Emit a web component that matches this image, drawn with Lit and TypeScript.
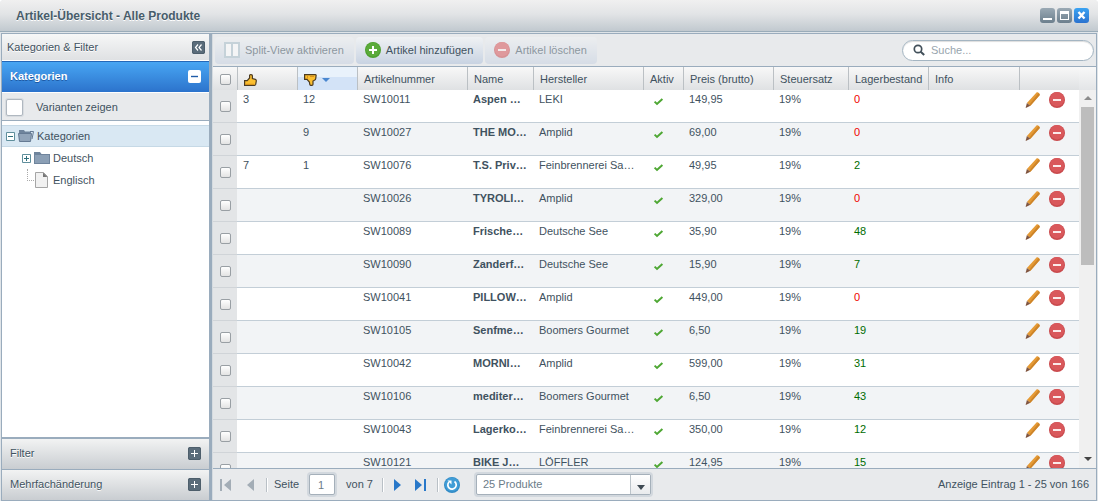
import { LitElement, html, css, svg } from "lit";
import { customElement } from "lit/decorators.js";
import { classMap } from "lit/directives/class-map.js";

interface Article {
  up: string;
  down: string;
  number: string;
  name: string;
  supplier: string;
  price: string;
  stock: number;
}

const article = (
  up: string, down: string, number: string, name: string, supplier: string, price: string, stock: number,
): Article => ({ up, down, number, name, supplier, price, stock });

const ARTICLES: Article[] = [
  article("3", "12", "SW10011", "Aspen …", "LEKI", "149,95", 0),
  article("", "9", "SW10027", "THE MO…", "Amplid", "69,00", 0),
  article("7", "1", "SW10076", "T.S. Priv…", "Feinbrennerei Sa…", "49,95", 2),
  article("", "", "SW10026", "TYROLI…", "Amplid", "329,00", 0),
  article("", "", "SW10089", "Frische…", "Deutsche See", "35,90", 48),
  article("", "", "SW10090", "Zanderf…", "Deutsche See", "15,90", 7),
  article("", "", "SW10041", "PILLOW…", "Amplid", "449,00", 0),
  article("", "", "SW10105", "Senfme…", "Boomers Gourmet", "6,50", 19),
  article("", "", "SW10042", "MORNI…", "Amplid", "599,00", 31),
  article("", "", "SW10106", "mediter…", "Boomers Gourmet", "6,50", 43),
  article("", "", "SW10043", "Lagerko…", "Feinbrennerei Sa…", "350,00", 12),
  article("", "", "SW10121", "BIKE J…", "LÖFFLER", "124,95", 15),
];

const icon = (content: unknown, w = 16, h = 16) =>
  html`<svg width=${w} height=${h} viewBox="0 0 ${w} ${h}" aria-hidden="true">${content}</svg>`;

const plusCircle = icon(svg`
  <circle cx="8" cy="8" r="8" fill="#4da02f"/><circle cx="8" cy="7.6" r="7" fill="#5bab3b"/>
  <path d="M8 4v8M4 8h8" stroke="#fff" stroke-width="2"/>`);
const minusCircle = icon(svg`
  <circle cx="8" cy="8" r="8" fill="#c94a4d"/><circle cx="8" cy="7.2" r="7.2" fill="#d9585b"/>
  <path d="M4 8h8" stroke="#fbeaea" stroke-width="2"/>`);
const splitView = icon(svg`
  <path d="M0 0h16v16H0z" fill="#a9bfcb"/><path d="M2 2h5v12H2zM9 2h5v12H9z" fill="#fff"/>`);
const pencil = icon(svg`
  <path d="M11.300.700c.600-.600 1.200-.600 1.800-.100l1.300 1.100c.500.500.500 1.100 0 1.700L5.400 13.700 1.900 11z" fill="#e59a35"/>
  <path d="M13.600 1l.8.7c.5.5.5 1.100 0 1.700L5.400 13.700l-1.100-.9z" fill="#cd8429"/>
  <path d="M1.900 11l3.500 2.700-4.100 2.100c-.4.2-.7 0-.6-.4z" fill="#80553f"/>`);
const check = icon(svg`<path d="M5.6 8.600l2.400 2.300 5.400-5" fill="none" stroke="#4ea733" stroke-width="2"/>`);
const hand = svg`
  <path d="M.6 6.600h2.600L5.600 4V1.200c0-.8 2.800-.8 2.800.6v2.800l3 .8c.8.300 1 .8.900 1.600l-.6 3.400c-.2.700-.6 1-1.300 1H.6z"
    fill="#fbbf30" stroke="#4b3b22" stroke-width="1.200"/>
  <path d="M1.500 10.300h8.500" stroke="#d9921b"/>`;
const thumbUp = icon(hand, 13, 12);
const thumbDown = icon(svg`
  <path d="M.6.6h10.800c.5 0 .8.4.7 1l-.4 3.200c-.1.800-.6 1.200-1.300 1.500L9 7v3.200c0 1.600-3 1.600-3.200.3L5.400 8 3 5.400H.6z"
    fill="#fbbf30" stroke="#4b3b22" stroke-width="1.200"/>
  <path d="M3.500 2v2.500M6 2.500h4" stroke="#d9921b"/>`, 13, 12);
const plus = icon(svg`<path d="M6.500 3v7M3 6.500h7" stroke="#fff"/>`, 13, 13);
const minus = icon(svg`<path d="M3 6.500h7" stroke="#1f5ba8" stroke-width="1.400"/>`, 13, 13);
const collapse = icon(svg`<path d="M6 3.500l-2.500 3L6 9.500M9.500 3.500L7 6.500l2.500 3" fill="none" stroke="#fff" stroke-width="1.200"/>`, 13, 13);
const expander = (open: boolean) => icon(svg`
  <path d="M.5.5h8v8h-8z" fill="#fff" stroke="#5f8f9c"/>
  <path d="M2 4.500h5${open ? "" : "M4.5 2v5"}" stroke="#2f6f7c"/>`, 9, 9);
const folder = icon(svg`
  <path d="M0 2h6l1.500 2H16v10H0z" fill="#6f849c"/><path d="M1 5h14v8H1z" fill="#8b9fb5"/>`);
const folderOpen = icon(svg`
  <path d="M1 2h5l1 1.500h6V6H4l-2.500 6H1z" fill="#6f849c"/>
  <path d="M.5 5.500H13.500L12.500 13.500H1.500z" fill="#91a4b9" stroke="#657a93"/>
  <path d="M12 3.500h3.500L14 11" fill="none" stroke="#657a93"/>`);
const page = icon(svg`
  <path d="M1.500.5h8l4 4v11h-12z" fill="#f1f1f1" stroke="#a5a5a5"/><path d="M9 .5v4.500h4.500z" fill="#777"/>`);
const loupe = icon(svg`
  <circle cx="5" cy="5" r="3.700" fill="none" stroke="#42505a" stroke-width="1.700"/>
  <path d="M7.700 7.700l3.500 3.300" stroke="#42505a" stroke-width="2"/>`, 12, 12);
const refresh = icon(svg`
  <circle cx="8" cy="8" r="8" fill="#318bc6"/><circle cx="8" cy="7.500" r="7" fill="#419dd6"/>
  <path d="M10.500 4.500A4.200 4.200 0 1 1 5 5" fill="none" stroke="#fff" stroke-width="1.700"/>
  <path d="M3.500 3.500h4v4z" fill="#fff"/>`);

@customElement("app-root")
export class AppRoot extends LitElement {
  static styles = css`
    :host {
      display: block;
      height: 100vh;
      overflow: hidden;
      font: 11px/13px "Liberation Sans", Arial, sans-serif;
      color: #3f5260;
    }
    * { box-sizing: border-box; }
    svg { display: block; flex: none; }
    button, input, select { font: inherit; color: inherit; margin: 0; }
    button { border: 0; padding: 0; background: none; }
    .window { height: 100%; display: flex; flex-direction: column; background: #dfe4e8; border-radius: 4px 4px 0 0; }
    .titlebar {
      flex: none; height: 32px; padding: 0 9px 0 16px; display: flex; align-items: center; gap: 2px;
      background: linear-gradient(#f0f0f0, #e2e4e6 45%, #c1c9cf); border-bottom: 1px solid #9aacb9;
      border-radius: 4px 4px 0 0;
    }
    .title { flex: 1; margin: 0; font-size: 12px; line-height: 14px; font-weight: bold; color: #475c6a; text-shadow: 0 1px #fff; }
    .tool {
      width: 15px; height: 15px; border-radius: 3px;
      background: linear-gradient(#9aa9b4, #6c7f8d);
    }
    .tool.close { background: linear-gradient(#3ba3f2, #2a72cf); }
    .frame { flex: 1; min-height: 0; display: flex; margin: 1px 1px 0; border: 1px solid #9aacbd; background: #9aacbd; }
    .sidebar { flex: none; width: 207px; display: flex; flex-direction: column; }
    .bar { flex: none; display: flex; align-items: center; justify-content: space-between; padding: 0 8px 2px 8px; }
    .bar h2 { margin: 0; font-size: inherit; font-weight: normal; text-shadow: 0 1px #fff; }
    .bar.top { height: 27px; padding: 0 4px 0 5px; background: linear-gradient(#f6f7f7, #dfe1e3); border-bottom: 1px solid #fff; }
    .bar.open { height: 32px; padding-bottom: 1px; background: linear-gradient(#48a6f3, #2c73cc); border-top: 1px solid #2468b8; border-bottom: 1px solid #fff; }
    .bar.open h2 { color: #fff; font-weight: bold; text-shadow: 0 1px #1d5aa5; }
    .bar.closed { height: 30px; margin-top: 1px; background: linear-gradient(#f2f3f3, #c9cdd1); }
    .square { width: 13px; height: 13px; border-radius: 2px; background: #5a6c7a; outline: 1px solid #4d5e6b; outline-offset: -1px; }
    .square.light { background: #fff; outline: 0; }
    .variants { flex: none; height: 28px; display: flex; align-items: center; gap: 13px; padding: 1px 0 0 4px; background: #e8eaec; border-bottom: 1px solid #9aacbd; }
    .variants input { appearance: none; width: 17px; height: 17px; background: #fff; border: 1px solid #b0b8c0; border-radius: 2px; box-shadow: 0 0 0 1px #d8dce0; }
    .tree { flex: 1; margin: 0 0 1px; padding: 4px 0 0; list-style: none; background: #fff; }
    .node { height: 22px; display: flex; align-items: center; padding-left: 20px; }
    .node.root { padding-left: 4px; background: #d9e8f3; border-block: 1px solid #c6d9e6; }
    .node svg + svg { margin: 0 3px; }
    .branch { width: 12px; height: 22px; flex: none; }
    .branch::before { content: ""; display: block; width: 8px; height: 11px; margin-left: 5px; border: dotted #aaa; border-width: 0 0 1px 1px; }
    .branch + svg { margin-right: 3px; }
    .main { flex: 1; min-width: 0; margin-left: 3px; display: flex; flex-direction: column; background: #e8eaec; border-left: 1px solid #d5dbe0; }
    .toolbar { flex: none; height: 33px; display: flex; align-items: center; gap: 2px; padding: 0 2px; border-bottom: 1px solid #9aacbd; }
    .action { height: 27px; display: flex; align-items: center; gap: 5px; padding: 0 10px 0 9px; border-radius: 4px; background: linear-gradient(#f0f2f4, #c8d3e2); white-space: nowrap; }
    .action:disabled { opacity: 0.55; }
    .search { margin-left: auto; width: 192px; height: 21px; display: flex; align-items: center; gap: 6px; padding: 0 10px; background: #fff; border: 1px solid #a4b5c2; border-radius: 11px; box-shadow: inset 0 1px 1px #ddd; }
    .search input { flex: 1; min-width: 0; border: 0; padding: 0; background: none; outline: 0; }
    .search input::placeholder { color: #98a5ae; opacity: 1; }
    .grid { flex: 1; min-height: 0; display: flex; overflow: hidden; background: #fff; }
    .rows { flex: 1; min-width: 0; overflow: hidden; }
    table { width: 100%; table-layout: fixed; border-collapse: separate; border-spacing: 0; }
    th { height: 23px; padding: 2px 0 0 6px; text-align: left; font-weight: normal; white-space: nowrap; background: linear-gradient(#f8f8f8, #dfe1e3); border-left: 1px solid #bbc0c4; }
    th:first-child { border-left: 0; }
    th.sorted { background: linear-gradient(#e9f2fb 45%, #d3e3f7 45%); }
    .sorter { display: flex; align-items: center; gap: 5px; }
    td { height: 33px; padding: 3px 0 0 6px; vertical-align: top; white-space: nowrap; overflow: hidden; border-bottom: 1px solid #c3ced7; }
    tr:nth-child(even) td { background: #f2f4f6; }
    tbody tr td.pick { padding: 11px 0 0 7px; background: #e3e5e7; border-color: #d0d4d8; }
    th.pick { padding: 2px 0 0 7px; }
    .pick input { appearance: none; display: block; width: 11px; height: 11px; border: 1px solid #999fa4; border-radius: 2px; background: linear-gradient(#fff, #e3e3e3); }
    .name { font-weight: bold; }
    .in { color: #006c00; }
    .out { color: #f00000; }
    td.tools { padding-top: 2px; }
    .pair { display: flex; gap: 8px; }
    .scroll { flex: none; width: 17px; display: flex; flex-direction: column; align-items: center; justify-content: space-between; background: #f0f0f0; }
    .cap { width: 100%; height: 23px; background: linear-gradient(#f8f8f8, #e3e5e7); }
    .thumb { width: 13px; height: 158px; background: #bdbdbd; margin-bottom: auto; }
    .scroll svg { margin: 5px 0; }
    .pager { flex: none; height: 32px; display: flex; align-items: center; padding: 0 7px; border-top: 1px solid #9aacbd; white-space: nowrap; }
    .sep { width: 1px; height: 14px; background: #b9c0c6; box-shadow: 1px 0 #fff; }
    .sep.inner { margin-left: 9px; }
    .first { margin-right: 16px; }
    .prev { margin-right: 12px; }
    .next { margin: 0 14px 0 11px; }
    .last { margin-right: 11px; }
    .reload { margin: 0 14px 0 6px; }
    .field { border: 1px solid #a5b0ba; border-radius: 2px; background: #fff; box-shadow: 0 0 0 2px #d2d8de; height: 21px; color: #6b7c89; }
    .pageno { display: flex; align-items: center; gap: 10px; margin: 0 11px 0 7px; }
    .pageno .field { width: 26px; padding: 0 0 0 8px; }
    .size { display: flex; margin-left: 2px; position: relative; }
    .size select { appearance: none; width: 175px; padding: 0 24px 0 6px; outline: 0; }
    .drop { position: absolute; right: 1px; top: 1px; width: 20px; height: 19px; padding: 10px 0 0 6px; border-left: 1px solid #bcc4ca; background: linear-gradient(#fff, #e9ebed); pointer-events: none; }
    .status { margin-left: auto; }
  `;

  private node(label: string, leading: unknown) {
    return html`<li class="node">${leading}<span>${label}</span></li>`;
  }

  private row(a: Article) {
    return html`<tr>
      <td class="pick"><input type="checkbox" aria-label=${a.number} /></td>
      <td>${a.up}</td><td>${a.down}</td><td>${a.number}</td>
      <td class="name">${a.name}</td><td>${a.supplier}</td><td>${check}</td>
      <td>${a.price}</td><td>19%</td>
      <td class=${classMap({ in: a.stock > 0, out: a.stock === 0 })}>${a.stock}</td>
      <td></td>
      <td class="tools"><div class="pair">
        <button aria-label="Bearbeiten">${pencil}</button><button aria-label="Löschen">${minusCircle}</button>
      </div></td>
    </tr>`;
  }

  render() {
    return html`<div class="window">
      <header class="titlebar">
        <h1 class="title">Artikel-Übersicht - Alle Produkte</h1>
        <button class="tool" aria-label="Minimieren">${icon(svg`<path d="M3 10h9v2H3z" fill="#fff"/>`, 15, 15)}</button>
        <button class="tool" aria-label="Maximieren">${icon(svg`<path d="M3 3h9v9H3zM4 6v5h7V6z" fill="#fff" fill-rule="evenodd"/>`, 15, 15)}</button>
        <button class="tool close" aria-label="Schließen">${icon(svg`<path d="M4.500 4l6 6.500M10.500 4l-6 6.500" stroke="#fff" stroke-width="2.400"/>`, 15, 15)}</button>
      </header>
      <div class="frame">
        <aside class="sidebar">
          <div class="bar top"><h2>Kategorien &amp; Filter</h2><button class="square" aria-label="Einklappen">${collapse}</button></div>
          <div class="bar open"><h2>Kategorien</h2><button class="square light" aria-label="Schließen">${minus}</button></div>
          <label class="variants"><input type="checkbox" />Varianten zeigen</label>
          <ul class="tree">
            <li class="node root">${expander(true)}${folderOpen}<span>Kategorien</span></li>
            ${this.node("Deutsch", html`${expander(false)}${folder}`)}
            ${this.node("Englisch", html`<span class="branch"></span>${page}`)}
          </ul>
          <div class="bar closed"><h2>Filter</h2><button class="square" aria-label="Filter öffnen">${plus}</button></div>
          <div class="bar closed"><h2>Mehrfachänderung</h2><button class="square" aria-label="Mehrfachänderung öffnen">${plus}</button></div>
        </aside>
        <main class="main">
          <div class="toolbar">
            <button class="action" disabled>${splitView}Split-View aktivieren</button>
            <button class="action">${plusCircle}Artikel hinzufügen</button>
            <button class="action" disabled>${minusCircle}Artikel löschen</button>
            <label class="search">${loupe}<input type="search" placeholder="Suche..." aria-label="Suche" /></label>
          </div>
          <div class="grid">
            <div class="rows"><table>
              <colgroup>
                ${[24, 60, 60, 110, 66, 110, 40, 90, 75, 80].map((w) => html`<col style="width:${w}px" />`)}
                <col /><col style="width:60px" />
              </colgroup>
              <thead><tr>
                <th class="pick"><input type="checkbox" aria-label="Alle auswählen" /></th>
                <th>${thumbUp}</th>
                <th class="sorted"><div class="sorter">${thumbDown}${icon(svg`<path d="M0 1h8L4 5z" fill="#4a87d0"/>`, 8, 5)}</div></th>
                <th>Artikelnummer</th><th>Name</th><th>Hersteller</th><th>Aktiv</th>
                <th>Preis (brutto)</th><th>Steuersatz</th><th>Lagerbestand</th><th>Info</th><th></th>
              </tr></thead>
              <tbody>${ARTICLES.map((a) => this.row(a))}</tbody>
            </table></div>
            <div class="scroll">
              <div class="cap"></div>
              ${icon(svg`<path d="M0 5h8L4 1z" fill="#8c8c8c"/>`, 8, 7)}
              <div class="thumb"></div>
              ${icon(svg`<path d="M0 1h8L4 5z" fill="#454545"/>`, 8, 7)}
            </div>
          </div>
          <nav class="pager">
            <button class="first" aria-label="Erste Seite">${icon(svg`<path d="M0 0h2v12H0zM11 0v12L4 6z" fill="#a3adb6"/>`, 11, 12)}</button>
            <button class="prev" aria-label="Vorherige Seite">${icon(svg`<path d="M7 0v12L0 6z" fill="#a3adb6"/>`, 7, 12)}</button>
            <span class="sep"></span>
            <label class="pageno">Seite <input class="field" value="1" /></label>
            <span>von 7</span>
            <span class="sep inner"></span>
            <button class="next" aria-label="Nächste Seite">${icon(svg`<path d="M0 0v12l7-6z" fill="#2878c9"/>`, 7, 12)}</button>
            <button class="last" aria-label="Letzte Seite">${icon(svg`<path d="M0 0v12l7-6zM9 0h2v12H9z" fill="#2878c9"/>`, 11, 12)}</button>
            <span class="sep"></span>
            <button class="reload" aria-label="Aktualisieren">${refresh}</button>
            <span class="size">
              <select class="field" aria-label="Produkte pro Seite"><option>25 Produkte</option></select>
              <span class="drop">${icon(svg`<path d="M0 0h8L4 5z" fill="#3f4a53"/>`, 8, 5)}</span>
            </span>
            <span class="status">Anzeige Eintrag 1 - 25 von 166</span>
          </nav>
        </main>
      </div>
    </div>`;
  }
}
